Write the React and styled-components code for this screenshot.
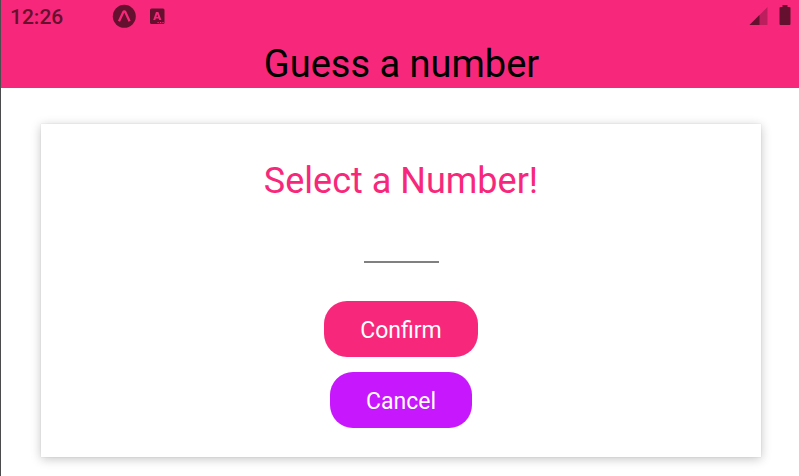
import React from "react";
import styled, { createGlobalStyle } from "styled-components";

const GlobalStyle = createGlobalStyle`
  * { box-sizing: border-box; }
  body {
    margin: 0;
    background: #fff;
    font-family: Roboto, sans-serif;
  }
`;

const Screen = styled.div`
  min-height: 100vh;
  border-left: 1px solid #4b4a4c;
  background: #fff;
`;

const Header = styled.header`
  background: #f7287b;
`;

const StatusBar = styled.div`
  display: flex;
  align-items: center;
  justify-content: space-between;
  height: 34px;
  padding: 0 8px 2px 9px;
  color: #65102f;
`;

const StatusGroup = styled.div`
  display: flex;
  align-items: center;
  gap: ${(p) => p.$gap}px;
`;

const Clock = styled.time`
  width: 89px;
  padding-top: 2px;
  font-size: 21px;
  line-height: 32px;
  font-weight: 500;
`;

const Title = styled.h1`
  margin: 0;
  padding: 8px 0 2px 3px;
  font-size: 38px;
  line-height: 44px;
  font-weight: 400;
  text-align: center;
  color: #000;
`;

const Card = styled.form`
  display: flex;
  flex-direction: column;
  align-items: center;
  margin: 36px 38px 0 40px;
  padding: 36px 36px 29px;
  background: #fff;
  box-shadow: 0 2px 10px rgba(0, 0, 0, 0.23), 0 0 1px rgba(0, 0, 0, 0.15);
`;

const Prompt = styled.label`
  font-size: 36px;
  line-height: 42px;
  color: #f7287b;
`;

const NumberInput = styled.input`
  width: 75px;
  height: 45px;
  margin: 16px 0 38px;
  padding: 0;
  border: 0;
  border-bottom: 2px solid #808080;
  border-radius: 0;
  outline: 0;
  background: transparent;
  font: 400 24px Roboto, sans-serif;
  text-align: center;
`;

const Actions = styled.div`
  display: flex;
  flex-direction: column;
  align-items: center;
  gap: 15px;
`;

const ActionButton = styled.button`
  height: 56px;
  padding: 4px 36px 0;
  border: 0;
  border-radius: 23px;
  background: ${(p) => p.$color};
  color: #fff;
  font: 400 23px/28px Roboto, sans-serif;
  cursor: pointer;
`;

const ExpoIcon = () => (
  <svg width="24" height="24" viewBox="0 0 24 24" aria-hidden="true">
    <circle cx="12.300" cy="12.300" r="11.500" fill="#65102f" />
    <path d="M7 17.200 11.200 8.200Q12.300 6.400 13.400 8.200L17.600 17.200" fill="none" stroke="#f7287b" strokeWidth="2.300" />
  </svg>
);

const KeyboardIcon = () => (
  <svg width="16" height="16" viewBox="0 0 16 16" aria-hidden="true">
    <rect x="1" y="0.5" width="14.500" height="15.500" rx="1.500" fill="#65102f" />
    <path
      fillRule="evenodd"
      fill="#f7287b"
      d="M7 4h2.400l3 8h-2.200l-.5-1.500H6.800L6.300 12H4.200zm1.200 2.200L7.400 8.900h1.700z"
    />
    <path d="M8.500 14.500h1.200M11 14.500h1.200M13.400 14.500h1.200" stroke="#f7287b" strokeWidth="1.200" />
  </svg>
);

const SignalIcon = () => (
  <svg width="19" height="20" viewBox="0 0 19 20" aria-hidden="true">
    <path d="M0.500 19 18.500 1V19z" fill="#bd1e5e" />
    <path d="M0.500 19 10.500 9V19z" fill="#65102f" />
  </svg>
);

const BatteryIcon = () => (
  <svg width="12" height="22" viewBox="0 0 12 22" aria-hidden="true">
    <path d="M3.500 0h5v2H10.500q1 0 1 1v16q0 1-1 1h-9q-1 0-1-1v-16q0-1 1-1h2z" fill="#65102f" />
  </svg>
);

export default function App() {
  return (
    <Screen>
      <GlobalStyle />
      <Header>
        <StatusBar>
          <StatusGroup $gap={13}>
            <StatusGroup $gap={13}>
              <Clock>12:26</Clock>
              <ExpoIcon />
            </StatusGroup>
            <KeyboardIcon />
          </StatusGroup>
          <StatusGroup $gap={11}>
            <SignalIcon />
            <BatteryIcon />
          </StatusGroup>
        </StatusBar>
        <Title>Guess a number</Title>
      </Header>
      <main>
        <Card onSubmit={(event) => event.preventDefault()}>
          <Prompt htmlFor="guess">Select a Number!</Prompt>
          <NumberInput id="guess" type="text" inputMode="numeric" maxLength={2} />
          <Actions>
            <ActionButton type="submit" $color="#f7287b">Confirm</ActionButton>
            <ActionButton type="reset" $color="#c717fc">Cancel</ActionButton>
          </Actions>
        </Card>
      </main>
    </Screen>
  );
}
